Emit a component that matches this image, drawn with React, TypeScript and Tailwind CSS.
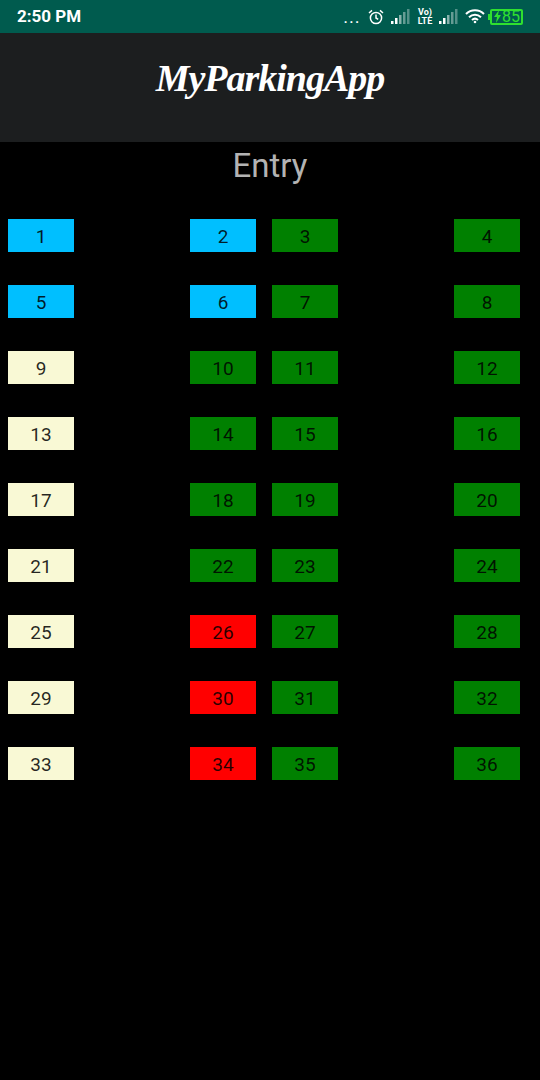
import React from 'react';

type SlotState = 'blue' | 'cream' | 'green' | 'red';

const slotClass: Record<SlotState, string> = {
  blue: 'bg-[#00bfff]',
  cream: 'bg-[#f9f9d5]',
  green: 'bg-[#008000]',
  red: 'bg-[#ff0000]',
};

const stateOf = (n: number): SlotState => {
  if ([1, 2, 5, 6].includes(n)) return 'blue';
  if ([26, 30, 34].includes(n)) return 'red';
  if (n % 4 === 1) return 'cream';
  return 'green';
};

const Slot: React.FC<{ n: number }> = ({ n }) => (
  <div className={`w-[66px] h-[33px] flex items-center justify-center pt-[3px] text-black/85 text-[19px] ${slotClass[stateOf(n)]}`}>
    {n}
  </div>
);

const Signal: React.FC = () => (
  <svg width="20" height="16" viewBox="0 0 20 16">
    <rect x="0" y="12" width="2.5" height="3" fill="#fff" />
    <rect x="4" y="9" width="2.5" height="6" fill="#fff" />
    <rect x="8" y="6" width="2.5" height="9" fill="#ffffff88" />
    <rect x="12" y="3" width="2.5" height="12" fill="#ffffff66" />
    <rect x="16" y="0" width="2.5" height="15" fill="#ffffff55" />
  </svg>
);

const StatusBar: React.FC = () => (
  <div className="h-[33px] bg-[#005b4e] flex items-center justify-between pl-[17px] pr-[17px] text-white">
    <span className="text-[17px] font-bold font-['Roboto',sans-serif]">2:50 PM</span>
    <div className="flex items-center">
      <span className="text-[13px] tracking-[2px] mr-[7px] mt-1 leading-none font-bold">...</span>
      <svg width="16" height="16" viewBox="0 0 16 16" fill="none" stroke="#fff" strokeWidth="1.5" className="mr-[7px]">
        <circle cx="8" cy="9" r="5.6" />
        <path d="M8 5.6V9l2.2 1.4M1 4l3-2.6M15 4l-3-2.6" />
      </svg>
      <Signal />
      <div className="w-[18px] ml-[5px] mr-[5px] flex flex-col items-center text-[9px] leading-[9px] font-bold font-['Roboto',sans-serif]">
        <span>Vo)</span>
        <span>LTE</span>
      </div>
      <Signal />
      <svg width="20" height="15" viewBox="0 0 20 15" fill="none" stroke="#fff" strokeWidth="2" className="ml-[6px] mr-[5px]">
        <path d="M1 5c5-5 13-5 18 0M4 8.200c3.500-3.300 8.500-3.300 12 0M7 11c1.800-1.600 4.200-1.600 6 0" />
        <circle cx="10" cy="13" r="1.300" fill="#fff" stroke="none" />
      </svg>
      <div className="relative w-[33px] h-[16px] border-2 border-[#2fe02f] rounded-[2px] flex items-center text-[#2fe02f] text-[16px] leading-none font-['Roboto',sans-serif]">
        <div className="absolute -left-[4px] top-[3px] w-[2px] h-[6px] bg-[#2fe02f]" />
        <svg width="9" height="13" viewBox="0 0 9 13" className="ml-px shrink-0">
          <path d="M6 0 1 7h3l-1 6 5-8H5z" fill="#2fe02f" />
        </svg>
        <span>85</span>
      </div>
    </div>
  </div>
);

const App: React.FC = () => {
  const rows = [1, 5, 9, 13, 17, 21, 25, 29, 33];

  return (
    <div className="w-[540px] h-[1080px] bg-black overflow-hidden font-['Roboto',sans-serif]">
      <StatusBar />
      <div className="h-[109px] bg-[#1c1e1f] flex justify-center pt-[15px]">
        <span className="text-white text-[38px] leading-[60px] italic font-bold font-['Liberation_Serif',serif] tracking-[-1px]">
          MyParkingApp
        </span>
      </div>
      <div className="h-[77px] pt-[5px] text-center text-[#b3b3b3] text-[33px] leading-[38px]">Entry</div>
      <div className="flex flex-col gap-[33px] pl-2 pr-5">
        {rows.map((n) => (
          <div key={n} className="flex justify-between">
            <Slot n={n} />
            <div className="flex gap-4">
              <Slot n={n + 1} />
              <Slot n={n + 2} />
            </div>
            <Slot n={n + 3} />
          </div>
        ))}
      </div>
    </div>
  );
};

export default App;
